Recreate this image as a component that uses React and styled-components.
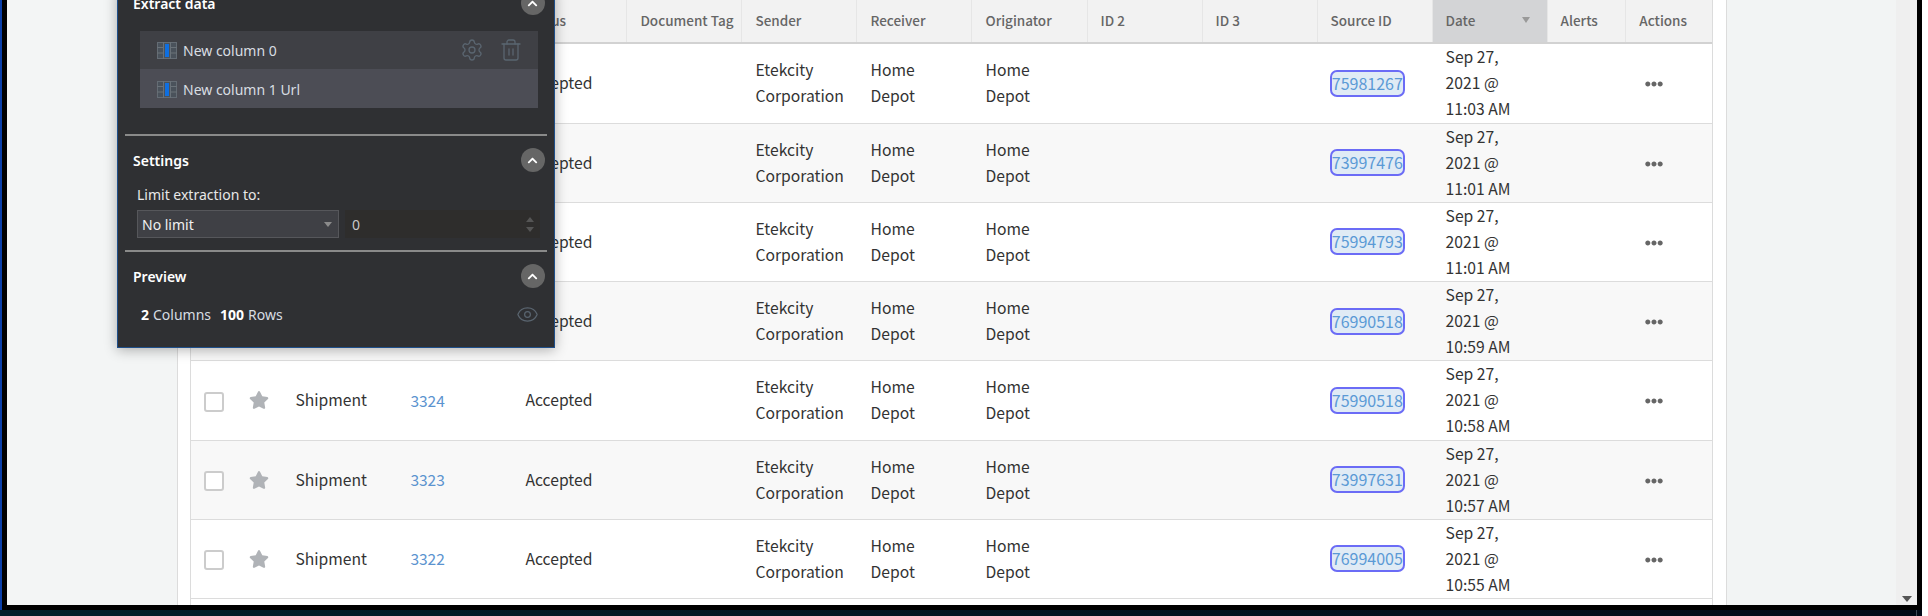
import React from "react";
import styled, { createGlobalStyle } from "styled-components";
import { Settings as GearIcon, Trash2, Eye } from "lucide-react";
import { FaChevronUp, FaStar, FaEllipsisH } from "react-icons/fa";

const Global = createGlobalStyle`
  html, body { margin: 0; padding: 0; background: #fff; overflow: hidden; }
  * { box-sizing: border-box; }
`;

const COLUMNS = "45px 46.4px repeat(11, 115.02px) 78.8px 86px";

const Screen = styled.div`
  position: relative;
  width: 1928px;
  height: 616px;
  overflow: hidden;
  background: #fff;
`;
const Window = styled.div`
  width: 1922px;
  height: 610px;
  border-left: 2px solid #0b3fa8;
`;
const Viewport = styled.div`
  display: flex;
  height: 610px;
  border: 5px solid #000;
  border-top: 0;
  overflow: hidden;
`;
const Taskbar = styled.div`
  display: flex;
  width: 1922px;
  height: 6px;
  background: linear-gradient(90deg, #03202a, #020a18);
`;
const TaskTick = styled.span`
  width: 1px;
  height: 6px;
  margin-left: 1916px;
  background: #3f4a58;
`;
const Sidebar = styled.div`
  flex: 0 0 171px;
  background: #f3f5f5;
  border-right: 1px solid #dcdcdc;
`;
const Page = styled.div`
  flex: 0 0 1549px;
  background: #fff;
  padding: 0 13.5px 0 12px;
  border-right: 1px solid #dcdcdc;
`;
const Gutter = styled.div`
  flex: 1;
  background: #f2f4f4;
`;
const Scrollbar = styled.div`
  position: relative;
  flex: 0 0 21px;
  background: #efefef;
`;
const ScrollArrow = styled.span`
  position: absolute;
  left: 6px;
  bottom: 3px;
  border-left: 5px solid transparent;
  border-right: 5px solid transparent;
  border-top: 6px solid #555;
`;

const Table = styled.div`
  font-family: "Noto Sans CJK SC", "Source Sans Pro", sans-serif;
  border-left: 1px solid #dcdcdc;
  border-right: 1px solid #dcdcdc;
  margin-right: -0.6px;
  height: 610px;
`;
const HeadRow = styled.div`
  display: grid;
  grid-template-columns: ${COLUMNS};
  height: 44.4px;
  background: #f2f2f2;
  border-bottom: 2px solid #d2d2d2;
`;
const HeadCell = styled.div`
  display: flex;
  align-items: center;
  justify-content: space-between;
  padding: 0 9px 3px 13px;
  font-size: 13.5px;
  font-weight: 500;
  color: #666;
  white-space: nowrap;
  background: ${(p) => (p.$sorted ? "#d3d4d6" : "transparent")};
  border-right: 1px solid #e6e6e6;
  &:last-child { border-right: 0; }
`;
const SortArrow = styled.span`
  margin-right: 8px;
  border-left: 4px solid transparent;
  border-right: 4px solid transparent;
  border-top: 6px solid #999;
`;
const Row = styled.div`
  display: grid;
  grid-template-columns: ${COLUMNS};
  height: 79.25px;
  background: ${(p) => (p.$odd ? "#f8f8f8" : "#fff")};
  border-bottom: 1px solid #dcdcdc;
`;
const Cell = styled.div`
  display: flex;
  align-items: center;
  padding: 0 0 2px 13px;
  font-size: 15.7px;
  line-height: 26px;
  color: #333;
  white-space: nowrap;
`;
const CenterCell = styled(Cell)`
  padding: 0;
  justify-content: center;
`;
const StarCell = styled(CenterCell)`
  padding-bottom: 2px;
`;
const ActionCell = styled(Cell)`
  padding: 0 0 0 19px;
  color: #666;
`;
const Checkbox = styled.span`
  width: 20px;
  height: 20px;
  margin: 1px 0 0 1px;
  background: #fff;
  border: 2px solid #ccc;
  border-radius: 3px;
`;
const NumberLink = styled.span`
  font-size: 15.5px;
  line-height: 24px;
  margin-bottom: 1px;
  color: #5b93cf;
`;
const SourceLink = styled.span`
  display: inline-block;
  width: 75.5px;
  height: 27px;
  margin-left: -1px;
  line-height: 23px;
  font-size: 16px;
  text-align: center;
  color: #5b9ad5;
  background: #e0ebf5;
  border: 2px solid #6b6cf6;
  border-radius: 7px;
`;

const Panel = styled.div`
  position: absolute;
  left: 117px;
  top: -12px;
  width: 438px;
  height: 360px;
  padding-top: 2px;
  background: #2f3033;
  border: 1px solid #1f4f8a;
  box-shadow: 0 2px 12px rgba(0, 0, 0, 0.3);
  font-family: "Noto Sans", "Open Sans", sans-serif;
  font-size: 14px;
  color: #e8e8e8;
`;
const SectionHead = styled.div`
  display: flex;
  align-items: center;
  justify-content: space-between;
  height: 24px;
  margin-top: ${(p) => p.$top || 0}px;
  padding: 0 9.5px 0 15px;
  font-weight: 600;
  font-size: 14px;
  color: #fff;
`;
const Collapse = styled.span`
  display: flex;
  align-items: center;
  justify-content: center;
  width: 24px;
  height: 24px;
  border-radius: 50%;
  background: #666;
  color: #fff;
  font-size: 11px;
`;
const ColumnList = styled.div`
  width: 398px;
  margin: 16px 0 0 22px;
`;
const ColumnItem = styled.div`
  display: flex;
  align-items: center;
  height: ${(p) => (p.$active ? 39 : 38)}px;
  padding: ${(p) => (p.$active ? 1 : 0)}px 15px 0 17px;
  background: ${(p) => (p.$active ? "#4c4d55" : "#3f4045")};
`;
const ColumnName = styled.span`
  flex: 1;
  margin-left: 6px;
  color: #d8dde2;
`;
const ItemTool = styled.span`
  display: flex;
  color: #5a6570;
  margin-left: ${(p) => p.$gap || 0}px;
`;
const Divider = styled.div`
  height: 2px;
  margin: ${(p) => p.$top}px 7px 0;
  background: #8a8a8a;
`;
const FieldLabel = styled.div`
  height: 20px;
  line-height: 20px;
  margin: 13px 0 0 19px;
  color: #e8e8e8;
`;
const Controls = styled.div`
  display: flex;
  gap: 6px;
  margin: 5px 0 0 19px;
`;
const SelectBox = styled.div`
  position: relative;
  display: flex;
  align-items: center;
  width: 202px;
  height: 28px;
  padding-left: 4px;
  background: #3f4045;
  border: 1.5px solid #56575b;
  color: #f0f0f0;
`;
const SelectArrow = styled.span`
  position: absolute;
  right: 6px;
  top: 11px;
  border-left: 4px solid transparent;
  border-right: 4px solid transparent;
  border-top: 5px solid #8b8b8b;
`;
const NumberBox = styled.div`
  position: relative;
  display: flex;
  align-items: center;
  width: 195px;
  height: 28px;
  padding-left: 7px;
  background: #2e2d2c;
  color: #c8c8c8;
`;
const Spin = styled.span`
  position: absolute;
  right: 6px;
  top: ${(p) => p.$top}px;
  border-left: 4px solid transparent;
  border-right: 4px solid transparent;
  ${(p) => (p.$up ? "border-bottom" : "border-top")}: 5px solid #555;
`;
const Summary = styled.div`
  display: flex;
  align-items: center;
  height: 20px;
  margin-top: 16px;
  padding: 0 15px 0 23px;
  color: #d8dde2;
`;
const Count = styled.b`
  color: #fff;
  font-weight: 700;
  margin-right: 4px;
`;
const SummaryText = styled.span`
  margin-right: 9px;
`;
const SummaryEye = styled.span`
  display: flex;
  margin-left: auto;
  color: #5a6570;
`;

const ColumnGlyph = () => (
  <svg width="20" height="17" viewBox="0 0 20 17">
    <rect x="0.5" y="0.5" width="19" height="16" fill="#4a525b" stroke="#646c74" />
    <path d="M6.5 0v17M13.5 0v17M0 5.5h6M14 5.5h6M0 11h6M14 11h6" stroke="#6a7279" fill="none" />
    <rect x="8" y="2" width="4" height="13" fill="#0f6fe0" />
  </svg>
);

const rows = [
  ["3328", "75981267", "11:03 AM"],
  ["3327", "73997476", "11:01 AM"],
  ["3326", "75994793", "11:01 AM"],
  ["3325", "76990518", "10:59 AM"],
  ["3324", "75990518", "10:58 AM"],
  ["3323", "73997631", "10:57 AM"],
  ["3322", "76994005", "10:55 AM"],
];

const heads = ["Type", "Number", "Status", "Document Tag", "Sender", "Receiver", "Originator", "ID 2", "ID 3", "Source ID"];

const Lines = ({ a, b, c }) => (
  <div>
    {a}
    <br />
    {b}
    {c && <br />}
    {c}
  </div>
);

export default function App() {
  return (
    <Screen>
      <Global />
      <Window>
        <Viewport>
          <Sidebar />
          <Page>
            <Table>
              <HeadRow>
                <HeadCell />
                <HeadCell />
                {heads.map((h) => (
                  <HeadCell key={h}>{h}</HeadCell>
                ))}
                <HeadCell $sorted>
                  Date
                  <SortArrow />
                </HeadCell>
                <HeadCell>Alerts</HeadCell>
                <HeadCell>Actions</HeadCell>
              </HeadRow>
              {rows.map(([num, src, time], i) => (
                <Row key={num} $odd={i % 2 === 1}>
                  <CenterCell>
                    <Checkbox />
                  </CenterCell>
                  <StarCell>
                    <FaStar size={20} color="#b0b3b7" />
                  </StarCell>
                  <Cell>Shipment</Cell>
                  <Cell>
                    <NumberLink>{num}</NumberLink>
                  </Cell>
                  <Cell>Accepted</Cell>
                  <Cell />
                  <Cell>
                    <Lines a="Etekcity" b="Corporation" />
                  </Cell>
                  <Cell>
                    <Lines a="Home" b="Depot" />
                  </Cell>
                  <Cell>
                    <Lines a="Home" b="Depot" />
                  </Cell>
                  <Cell />
                  <Cell />
                  <Cell>
                    <SourceLink>{src}</SourceLink>
                  </Cell>
                  <Cell>
                    <Lines a="Sep 27," b="2021 @" c={time} />
                  </Cell>
                  <Cell />
                  <ActionCell>
                    <FaEllipsisH size={18} />
                  </ActionCell>
                </Row>
              ))}
            </Table>
          </Page>
          <Gutter />
          <Scrollbar>
            <ScrollArrow />
          </Scrollbar>
        </Viewport>
      </Window>
      <Taskbar>
        <TaskTick />
      </Taskbar>
      <Panel>
        <SectionHead>
          Extract data
          <Collapse>
            <FaChevronUp />
          </Collapse>
        </SectionHead>
        <ColumnList>
          <ColumnItem>
            <ColumnGlyph />
            <ColumnName>New column 0</ColumnName>
            <ItemTool>
              <GearIcon size={24} strokeWidth={1.3} />
            </ItemTool>
            <ItemTool $gap={15}>
              <Trash2 size={24} strokeWidth={1.3} />
            </ItemTool>
          </ColumnItem>
          <ColumnItem $active>
            <ColumnGlyph />
            <ColumnName>New column 1 Url</ColumnName>
          </ColumnItem>
        </ColumnList>
        <Divider $top={26} />
        <SectionHead $top={12}>
          Settings
          <Collapse>
            <FaChevronUp />
          </Collapse>
        </SectionHead>
        <FieldLabel>Limit extraction to:</FieldLabel>
        <Controls>
          <SelectBox>
            No limit
            <SelectArrow />
          </SelectBox>
          <NumberBox>
            0
            <Spin $up $top={7} />
            <Spin $top={17} />
          </NumberBox>
        </Controls>
        <Divider $top={12} />
        <SectionHead $top={12}>
          Preview
          <Collapse>
            <FaChevronUp />
          </Collapse>
        </SectionHead>
        <Summary>
          <Count>2</Count>
          <SummaryText>Columns</SummaryText>
          <Count>100</Count>
          <SummaryText>Rows</SummaryText>
          <SummaryEye>
            <Eye size={23} strokeWidth={1.3} />
          </SummaryEye>
        </Summary>
      </Panel>
    </Screen>
  );
}
